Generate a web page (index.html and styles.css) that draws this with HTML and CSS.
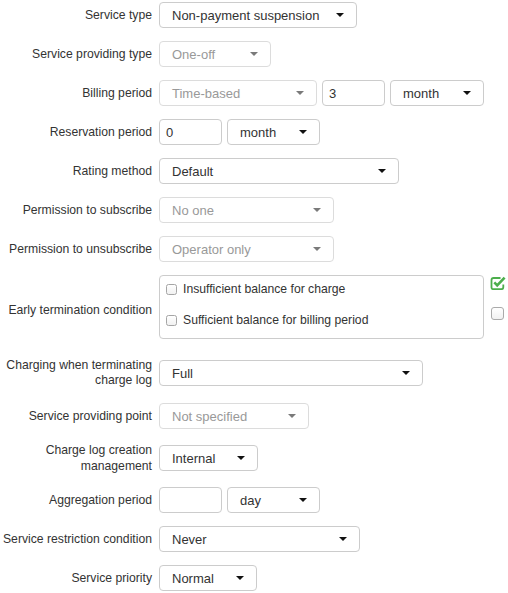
FILE: index.html
```html
<!DOCTYPE html>
<html lang="en">
<head>
  <meta charset="UTF-8">
  <title>Service settings</title>
  <link rel="stylesheet" href="styles.css">
</head>
<body>

  <form class="svc-form">
    <div class="row">
      <label class="lbl">Service type</label>
      <div class="field w-service">Non-payment suspension <span class="caret"></span></div>
    </div>

    <div class="row">
      <label class="lbl">Service providing type</label>
      <div class="field off w-oneoff">One-off <span class="caret"></span></div>
    </div>

    <div class="row">
      <label class="lbl">Billing period</label>
      <div class="pair">
        <div class="field off w-timebased">Time-based <span class="caret"></span></div>
        <div class="field num">3</div>
        <div class="field w-unit-wide">month <span class="caret"></span></div>
      </div>
    </div>

    <div class="row">
      <label class="lbl">Reservation period</label>
      <div class="pair">
        <div class="field num">0</div>
        <div class="field w-unit">month <span class="caret"></span></div>
      </div>
    </div>

    <div class="row">
      <label class="lbl">Rating method</label>
      <div class="field w-rating">Default <span class="caret"></span></div>
    </div>

    <div class="row">
      <label class="lbl">Permission to subscribe</label>
      <div class="field off w-perm">No one <span class="caret"></span></div>
    </div>

    <div class="row">
      <label class="lbl">Permission to unsubscribe</label>
      <div class="field off w-perm">Operator only <span class="caret"></span></div>
    </div>

    <div class="row row-group">
      <label class="lbl">Early termination condition</label>
      <div class="checks">
        <label class="chk-item"><span class="box"></span>Insufficient balance for charge</label>
        <label class="chk-item"><span class="box"></span>Sufficient balance for billing period</label>
      </div>
      <div class="side">
        <svg class="ok-icon" width="16" height="14" viewBox="0 0 16 14">
          <path d="M10.5 2 H3.6 Q1.5 2 1.5 4.1 V11.4 Q1.5 13.2 3.6 13.2 H11.3 Q13.3 13.2 13.3 11.2 V8.4"
                fill="none" stroke="#4cae4c" stroke-width="1.8"/>
          <path d="M4.3 6.4 L7.2 9.3 L14.6 1.6" fill="none" stroke="#4cae4c" stroke-width="2.6"/>
        </svg>
        <span class="box box-lg"></span>
      </div>
    </div>

    <div class="row row-tall">
      <label class="lbl">Charging when terminating charge log</label>
      <div class="field w-full">Full <span class="caret"></span></div>
    </div>

    <div class="row">
      <label class="lbl">Service providing point</label>
      <div class="field off w-point">Not specified <span class="caret"></span></div>
    </div>

    <div class="row row-tall row-tall-sm">
      <label class="lbl lbl-16">Charge log creation management</label>
      <div class="field w-internal">Internal <span class="caret"></span></div>
    </div>

    <div class="row">
      <label class="lbl">Aggregation period</label>
      <div class="pair">
        <div class="field num"></div>
        <div class="field w-unit">day <span class="caret"></span></div>
      </div>
    </div>

    <div class="row">
      <label class="lbl">Service restriction condition</label>
      <div class="field w-never">Never <span class="caret"></span></div>
    </div>

    <div class="row">
      <label class="lbl">Service priority</label>
      <div class="field w-priority">Normal <span class="caret"></span></div>
    </div>
  </form>

</body>
</html>
```

FILE: styles.css
```css
* {
  margin: 0;
  padding: 0;
  box-sizing: border-box;
}

body {
  font-family: "Liberation Sans", Arial, sans-serif;
  color: #333;
  background: #fff;
}

/* column flex so row margins add up instead of collapsing */
.svc-form {
  display: flex;
  flex-direction: column;
  padding-top: 2px;
}

.row {
  display: flex;
  align-items: center;
  height: 26px;
  margin-bottom: 13px;
}

.row-tall {
  margin-top: 4px;
  margin-bottom: 17px;
}

.row-tall-sm {
  margin-top: 3px;
  margin-bottom: 16px;
}

.row-group {
  height: auto;
  margin-bottom: 17px;
}

.row-group .lbl {
  padding-top: 6px;
}

.lbl {
  flex: none;
  width: 152px;
  margin-right: 7px;
  text-align: right;
  font-size: 12.2px;
  line-height: 15px;
}

.lbl-16 {
  line-height: 16px;
}

/* select-like boxes */
.field {
  flex: none;
  display: flex;
  align-items: center;
  height: 26px;
  padding: 0 12px;
  border: 1px solid #ccc;
  border-radius: 4px;
  background: #fff;
  font-size: 13px;
  color: #333;
  white-space: nowrap;
}

.field .caret {
  margin-left: auto;
  width: 0;
  height: 0;
  border-top: 4px solid #111;
  border-left: 4px solid transparent;
  border-right: 4px solid transparent;
}

.field.off {
  color: #999;
  border-color: #dcdcdc;
}

.field.off .caret {
  border-top-color: #7a7a7a;
}

.field.num {
  width: 63px;
  padding: 0 6px;
}

.pair {
  display: flex;
  gap: 5px;
}

.w-service { width: 198px; }
.w-oneoff { width: 112px; }
.w-timebased { width: 158px; }
.w-unit-wide { width: 94px; }
.w-unit { width: 93px; }
.w-rating { width: 240px; }
.w-perm { width: 175px; }
.w-full { width: 264px; }
.w-point { width: 150px; }
.w-internal { width: 99px; }
.w-never { width: 201px; }
.w-priority { width: 98px; }

/* checkbox group */
.checks {
  flex: none;
  display: flex;
  flex-direction: column;
  gap: 5px;
  width: 325px;
  padding: 0 6px 5px;
  border: 1px solid #ccc;
  border-radius: 4px;
}

.chk-item {
  display: flex;
  align-items: center;
  gap: 6px;
  height: 26px;
  font-size: 12.2px;
}

.box {
  display: inline-block;
  width: 11px;
  height: 11px;
  border: 1px solid #a5a5a5;
  border-radius: 2.5px;
  background: linear-gradient(#fff, #f1f1f1);
}

.side {
  align-self: flex-start;
  display: flex;
  flex-direction: column;
  align-items: flex-start;
  gap: 17px;
  margin-left: 6px;
  padding-top: 1px;
}

.box-lg {
  width: 13px;
  height: 13px;
  margin-left: 1px;
  border-color: #aaa;
  border-radius: 3px;
}
```
